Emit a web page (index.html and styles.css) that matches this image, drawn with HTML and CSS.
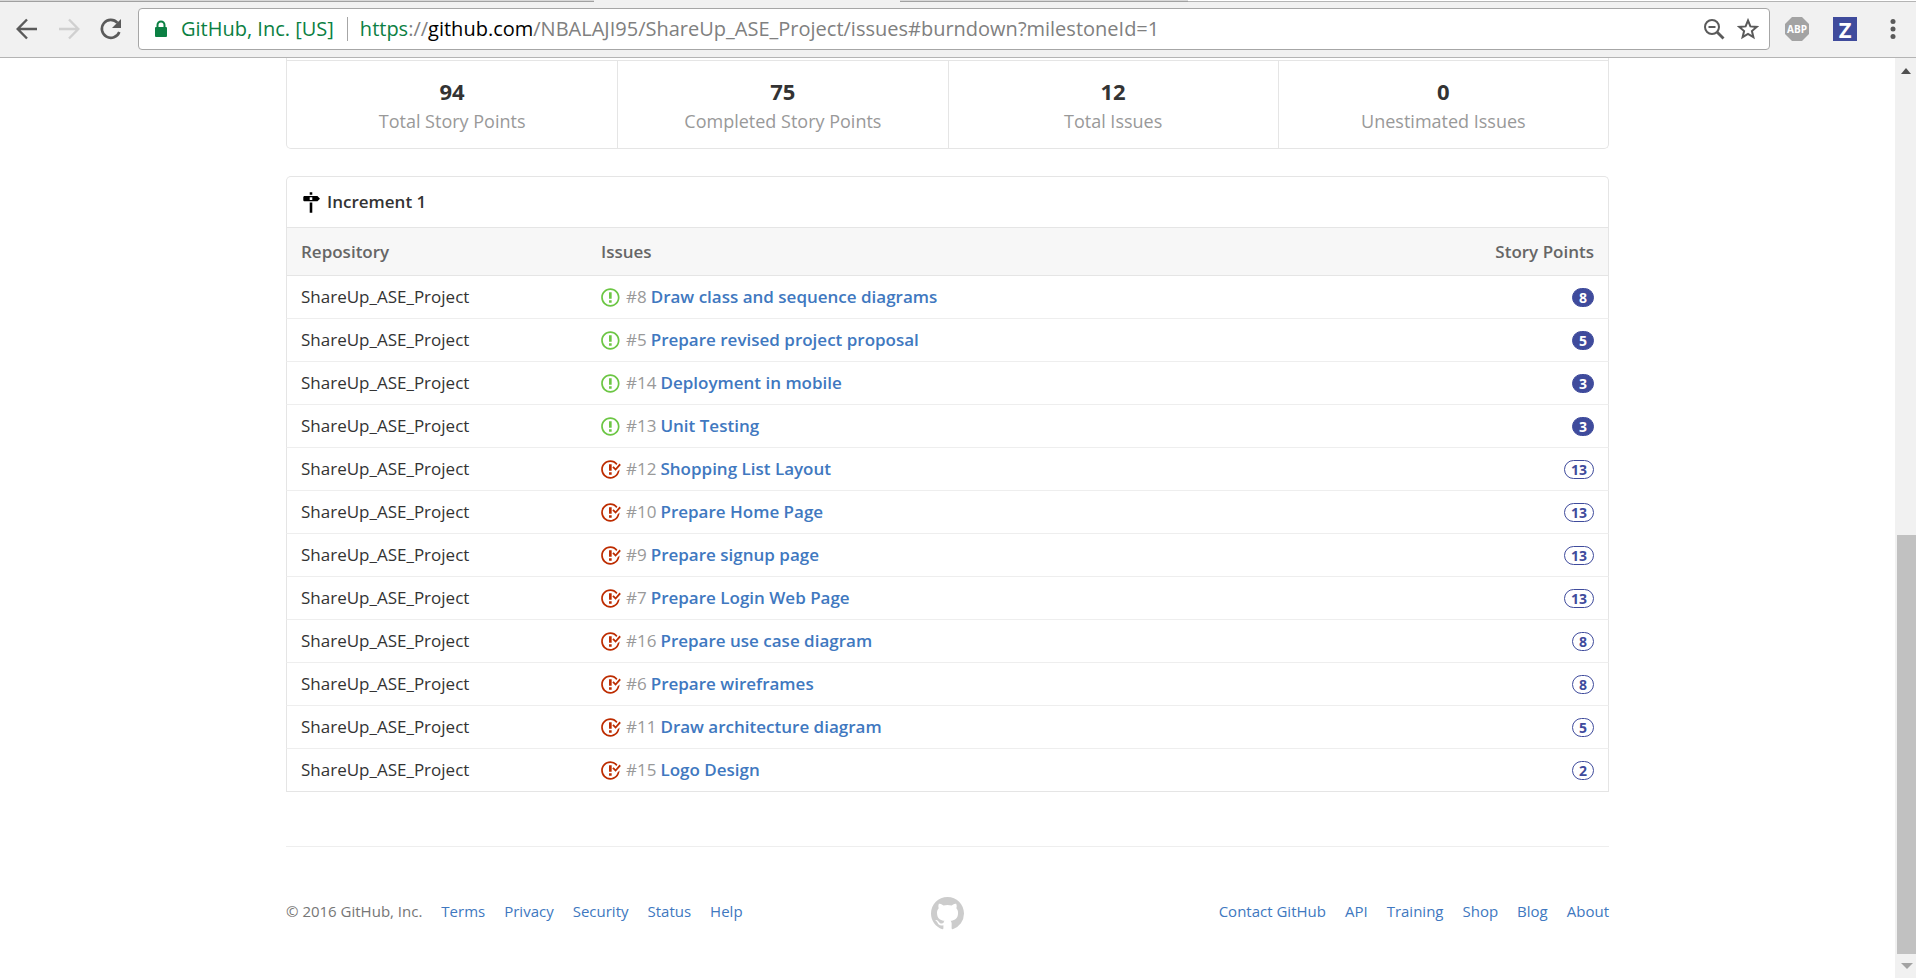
FILE: index.html
```html
<!DOCTYPE html>
<html lang="en">
<head>
<meta charset="utf-8">
<title>Issues · NBALAJI95/ShareUp_ASE_Project</title>
<link rel="stylesheet" href="styles.css">
</head>
<body>
<svg class="sprite" aria-hidden="true">
  <symbol id="open" viewBox="0 0 15 16"><path d="M7 2.3c3.14 0 5.7 2.56 5.7 5.7s-2.56 5.7-5.7 5.7A5.71 5.71 0 0 1 1.3 8c0-3.14 2.56-5.7 5.7-5.7zM7 1C3.14 1 0 4.14 0 8s3.14 7 7 7 7-3.14 7-7-3.14-7-7-7zm1 3H6v5h2V4zm0 6H6v2h2v-2z"/></symbol>
  <symbol id="closed" viewBox="1 0 15 16"><path d="M7 10h2v2H7v-2zm2-6H7v5h2V4zm1.5 1.5l-1 1L12 9l4-4.5-1-1L12 7l-1.5-1.5zM8 13.7A5.71 5.71 0 0 1 2.3 8c0-3.14 2.56-5.7 5.7-5.7 1.83 0 3.45.88 4.5 2.2l.92-.92A6.947 6.947 0 0 0 8 1C4.14 1 1 4.14 1 8s3.14 7 7 7 7-3.14 7-7l-1.52 1.52c-.66 2.41-2.86 4.19-5.48 4.19v-.01z"/></symbol>
</svg>

<div class="tabs"><i class="tab"></i><i class="tab"></i><i class="tab active"></i><i class="tab"></i><i class="rest"></i></div>
<header class="toolbar">
  <button class="nav" aria-label="Back"><svg width="24" height="24" viewBox="0 0 24 24" fill="none" stroke="#5a5a5a" stroke-width="2.4"><path d="M22 12H3M12 2.500L2.700 12l9.300 9.500"/></svg></button>
  <button class="nav" aria-label="Forward" disabled><svg width="24" height="24" viewBox="0 0 24 24" fill="none" stroke="#d0d0d0" stroke-width="2.400"><path d="M2 12h19M12 2.500L21.300 12 12 21.500"/></svg></button>
  <button class="nav" aria-label="Reload"><svg width="24" height="24" viewBox="0 0 24 24" fill="none" stroke="#5a5a5a" stroke-width="2.600"><path d="M20.300 15A9 9 0 1 1 18.500 5.800"/><path d="M22 2v9h-9z" fill="#5a5a5a" stroke="none"/></svg></button>
  <div class="address">
    <svg width="14" height="18" viewBox="0 0 14 18"><path d="M3.500 8V5a3.500 3.500 0 0 1 7 0v3" fill="none" stroke="#0b8043" stroke-width="2"/><rect x="1" y="7" width="12" height="10" rx="1" fill="#0b8043"/></svg>
    <span class="owner">GitHub, Inc. [US]</span>
    <div class="url" role="textbox" contenteditable="true" spellcheck="false" aria-label="Address"><span class="scheme">https</span>://<span class="host">github.com</span>/NBALAJI95/ShareUp_ASE_Project/issues#burndown?milestoneId=1</div>
    <button class="tool" aria-label="Zoom"><svg width="22" height="22" viewBox="0 0 22 22" fill="none" stroke="#5a5a5a" stroke-width="2"><circle cx="9" cy="9" r="7"/><path d="M5.500 9h7"/><path d="M14 14l6.500 6.500" stroke-width="2.800"/></svg></button>
    <button class="tool" aria-label="Bookmark"><svg width="22" height="22" viewBox="0 0 22 22" fill="none" stroke="#5a5a5a" stroke-width="2"><path d="M11 2.500l2.400 5.900 6.300.5-4.800 4.100 1.500 6.200-5.400-3.300-5.400 3.300 1.500-6.200-4.800-4.100 6.300-.5z"/></svg></button>
  </div>
  <button class="ext" aria-label="Adblock Plus"><svg width="24" height="24" viewBox="0 0 24 24"><path d="M7 0h10l7 7v10l-7 7H7l-7-7V7z" fill="#a3a3a3"/><text x="12" y="16" text-anchor="middle" class="abp">ABP</text></svg></button>
  <button class="ext zen" aria-label="ZenHub">Z</button>
  <button class="ext dots" aria-label="Menu"><svg width="6" height="24" viewBox="0 0 6 24" fill="#5a5a5a"><circle cx="3" cy="4.500" r="2.500"/><circle cx="3" cy="12" r="2.500"/><circle cx="3" cy="19.500" r="2.500"/></svg></button>
</header>

<div class="window">
  <div class="page">
    <main>
      <ul class="stats">
        <li><strong>94</strong><span>Total Story Points</span></li>
        <li><strong>75</strong><span>Completed Story Points</span></li>
        <li><strong>12</strong><span>Total Issues</span></li>
        <li><strong>0</strong><span>Unestimated Issues</span></li>
      </ul>

      <section class="panel">
        <h2><svg width="18" height="21" viewBox="0 0 14 16"><path d="M8 2H6V0h2v2zm4 5H2c-.55 0-1-.45-1-1V4c0-.55.45-1 1-1h10l2 2-2 2zM8 4H6v2h2V4zM6 16h2V8H6v8z"/></svg>Increment 1</h2>
        <table>
          <thead><tr><th class="repo">Repository</th><th>Issues</th><th class="points">Story Points</th></tr></thead>
          <tbody>
            <tr><td>ShareUp_ASE_Project</td><td><div class="issue"><svg class="open"><use href="#open"/></svg><span>#8</span><a href="#8">Draw class and sequence diagrams</a></div></td><td class="points"><span class="badge full">8</span></td></tr>
            <tr><td>ShareUp_ASE_Project</td><td><div class="issue"><svg class="open"><use href="#open"/></svg><span>#5</span><a href="#5">Prepare revised project proposal</a></div></td><td class="points"><span class="badge full">5</span></td></tr>
            <tr><td>ShareUp_ASE_Project</td><td><div class="issue"><svg class="open"><use href="#open"/></svg><span>#14</span><a href="#14">Deployment in mobile</a></div></td><td class="points"><span class="badge full">3</span></td></tr>
            <tr><td>ShareUp_ASE_Project</td><td><div class="issue"><svg class="open"><use href="#open"/></svg><span>#13</span><a href="#13">Unit Testing</a></div></td><td class="points"><span class="badge full">3</span></td></tr>
            <tr><td>ShareUp_ASE_Project</td><td><div class="issue"><svg class="closed"><use href="#closed"/></svg><span>#12</span><a href="#12">Shopping List Layout</a></div></td><td class="points"><span class="badge">13</span></td></tr>
            <tr><td>ShareUp_ASE_Project</td><td><div class="issue"><svg class="closed"><use href="#closed"/></svg><span>#10</span><a href="#10">Prepare Home Page</a></div></td><td class="points"><span class="badge">13</span></td></tr>
            <tr><td>ShareUp_ASE_Project</td><td><div class="issue"><svg class="closed"><use href="#closed"/></svg><span>#9</span><a href="#9">Prepare signup page</a></div></td><td class="points"><span class="badge">13</span></td></tr>
            <tr><td>ShareUp_ASE_Project</td><td><div class="issue"><svg class="closed"><use href="#closed"/></svg><span>#7</span><a href="#7">Prepare Login Web Page</a></div></td><td class="points"><span class="badge">13</span></td></tr>
            <tr><td>ShareUp_ASE_Project</td><td><div class="issue"><svg class="closed"><use href="#closed"/></svg><span>#16</span><a href="#16">Prepare use case diagram</a></div></td><td class="points"><span class="badge">8</span></td></tr>
            <tr><td>ShareUp_ASE_Project</td><td><div class="issue"><svg class="closed"><use href="#closed"/></svg><span>#6</span><a href="#6">Prepare wireframes</a></div></td><td class="points"><span class="badge">8</span></td></tr>
            <tr><td>ShareUp_ASE_Project</td><td><div class="issue"><svg class="closed"><use href="#closed"/></svg><span>#11</span><a href="#11">Draw architecture diagram</a></div></td><td class="points"><span class="badge">5</span></td></tr>
            <tr><td>ShareUp_ASE_Project</td><td><div class="issue"><svg class="closed"><use href="#closed"/></svg><span>#15</span><a href="#15">Logo Design</a></div></td><td class="points"><span class="badge">2</span></td></tr>
          </tbody>
        </table>
      </section>

      <footer>
        <nav><span>© 2016 GitHub, Inc.</span><a href="#terms">Terms</a><a href="#privacy">Privacy</a><a href="#security">Security</a><a href="#status">Status</a><a href="#help">Help</a></nav>
        <a href="#home" class="mark" aria-label="GitHub"><svg width="33" height="33" viewBox="0 0 16 16"><path fill="#ccc" d="M8 0C3.580 0 0 3.580 0 8c0 3.540 2.290 6.530 5.470 7.590.4.070.55-.17.55-.38 0-.19-.01-.82-.01-1.490-2.010.37-2.530-.49-2.690-.94-.09-.23-.48-.94-.82-1.130-.28-.15-.68-.52-.01-.53.63-.01 1.080.58 1.230.82.72 1.210 1.870.87 2.330.66.07-.52.28-.87.51-1.070-1.780-.2-3.640-.89-3.640-3.950 0-.87.31-1.590.82-2.150-.08-.2-.36-1.020.08-2.120 0 0 .67-.21 2.200.82.64-.18 1.320-.27 2-.27s1.360.09 2 .27c1.530-1.040 2.200-.82 2.200-.82.44 1.100.16 1.920.08 2.120.51.56.82 1.270.82 2.150 0 3.070-1.870 3.750-3.650 3.950.29.25.54.73.54 1.480 0 1.070-.01 1.930-.01 2.200 0 .21.15.46.55.38A8.010 8.010 0 0 0 16 8c0-4.420-3.580-8-8-8z"/></svg></a>
        <nav class="right"><a href="#contact">Contact GitHub</a><a href="#api">API</a><a href="#training">Training</a><a href="#shop">Shop</a><a href="#blog">Blog</a><a href="#about">About</a></nav>
      </footer>
    </main>
  </div>
  <div class="scrollbar" aria-hidden="true">
    <svg width="21" height="24" viewBox="0 0 21 24"><path d="M6 16l5-6 5 6z" fill="#505050"/></svg>
    <i class="before"></i><i class="thumb"></i>
    <svg width="21" height="24" viewBox="0 0 21 24"><path d="M6 9l6 6 6-6z" fill="#a3a3a3"/></svg>
  </div>
</div>
</body>
</html>
```

FILE: styles.css
```css
* { box-sizing: border-box; }
body {
  margin: 0;
  height: 100vh;
  display: flex;
  flex-direction: column;
  overflow: hidden;
  background: #fff;
  color: #333;
  font: 17px/24px "Open Sans", "Noto Sans", sans-serif;
}
svg { display: block; flex: none; }
a { color: #4078c0; text-decoration: none; }
button { padding: 0; border: 0; background: none; font: inherit; }
.sprite { position: absolute; width: 0; height: 0; }

/* Browser chrome */
.tabs { display: flex; flex: none; height: 2px; background: #f1f1f1; }
.tab { width: 16%; background: #d8d8d8; border-bottom: 1px solid #a0a0a0; }
.tab:first-child, .tab:nth-child(4) { width: 15%; }
.tab.active { background: #f1f1f1; border: 0; }
.rest { flex: 1; border-bottom: 1px solid #b4b4b4; background: #fff; }
.toolbar {
  flex: none;
  display: flex;
  align-items: center;
  padding: 6px 20px 7px 15px;
  background: #f1f1f1;
  border-bottom: 1px solid #b4b4b4;
}
.nav { margin-right: 18px; }
.nav:nth-child(3) { margin-right: 15px; }
.address {
  flex: 1;
  display: flex;
  align-items: center;
  height: 42px;
  padding: 0 10px 0 15px;
  background: #fff;
  border: 1px solid #a6a6a6;
  border-radius: 4px;
  font-size: 20px;
}
.owner {
  margin-left: 13px;
  padding-right: 13px;
  border-right: 1px solid #a6a6a6;
  color: #0b8043;
}
.url { flex: 1; margin-left: 12px; color: #808080; white-space: nowrap; outline: 0; }
.scheme { color: #0b8043; }
.host { color: #000; }
.tool { margin-left: 12px; }
.ext { margin-left: 15px; }
.abp { fill: #fff; font-size: 10px; font-weight: 700; }
.zen {
  width: 24px;
  height: 24px;
  margin-left: 24px;
  background: #3f4b9c;
  color: #fff;
  font-size: 22px;
  font-weight: 700;
  line-height: 24px;
}
.dots { margin-left: 33px; }

/* Page */
.window { flex: 1; min-height: 0; display: flex; }
.page { flex: 1; overflow: hidden; }
main { width: 70%; min-width: 980px; max-width: 1323px; margin: 0 auto; }

.stats {
  display: grid;
  grid-template-columns: repeat(4, 1fr);
  margin: 0 0 27px;
  padding: 2px 0 0;
  list-style: none;
  border: 1px solid #e5e5e5;
  border-top: 0;
  border-radius: 0 0 5px 5px;
}
.stats li {
  padding: 16px 0 13px;
  border-top: 1px solid #e5e5e5;
  border-left: 1px solid #e5e5e5;
  text-align: center;
}
.stats li:first-child { border-left: 0; }
.stats strong, .stats span { display: block; line-height: 28px; }
.stats strong { margin-bottom: 2px; font-size: 22px; }
.stats span { color: #999; font-size: 18px; }

.panel h2 {
  display: flex;
  align-items: center;
  gap: 7px;
  height: 51px;
  margin: 0;
  padding: 0 15px;
  border: 1px solid #e5e5e5;
  border-bottom: 0;
  border-radius: 5px 5px 0 0;
  font-size: 17px;
  font-weight: 600;
}
table { width: 100%; border-collapse: separate; border-spacing: 0; }
th {
  height: 49px;
  padding: 0 14px;
  background: #f7f7f7;
  border: solid #e5e5e5;
  border-width: 1px 0;
  color: #666;
  font-weight: 600;
  text-align: left;
}
td { height: 43px; padding: 0 14px; border-bottom: 1px solid #eee; }
th:first-child, td:first-child { border-left: 1px solid #e5e5e5; }
th:last-child, td:last-child { border-right: 1px solid #e5e5e5; }
tbody tr:last-child td { border-bottom-color: #e5e5e5; }
.repo { width: 301px; }
.points { text-align: right; }
.issue { display: flex; align-items: center; }
.issue svg { width: 20px; height: 21px; margin-right: 5px; }
.issue span { margin-right: 4px; color: #999; }
.issue a { font-weight: 600; }
.open { fill: #6cc644; }
.closed { fill: #bd2c00; }
.badge {
  display: inline-block;
  padding: 0 6px;
  border: 1px solid #3f4b9c;
  border-radius: 10px;
  color: #3f4b9c;
  font-size: 14px;
  font-weight: 700;
  line-height: 17px;
}
.badge.full { background: #3f4b9c; color: #fff; }

footer {
  display: grid;
  grid-template-columns: 1fr auto 1fr;
  align-items: center;
  margin-top: 54px;
  padding-top: 50px;
  border-top: 1px solid #eee;
  color: #767676;
  font-size: 15px;
}
footer nav { display: flex; gap: 19px; padding-bottom: 5px; white-space: nowrap; }
footer .right { justify-content: flex-end; }

.scrollbar {
  display: flex;
  flex-direction: column;
  width: 21px;
  background: #f1f1f1;
}
.before { flex: 453; }
.thumb { flex: 419; margin-left: 2px; background: #c1c1c1; }
```
